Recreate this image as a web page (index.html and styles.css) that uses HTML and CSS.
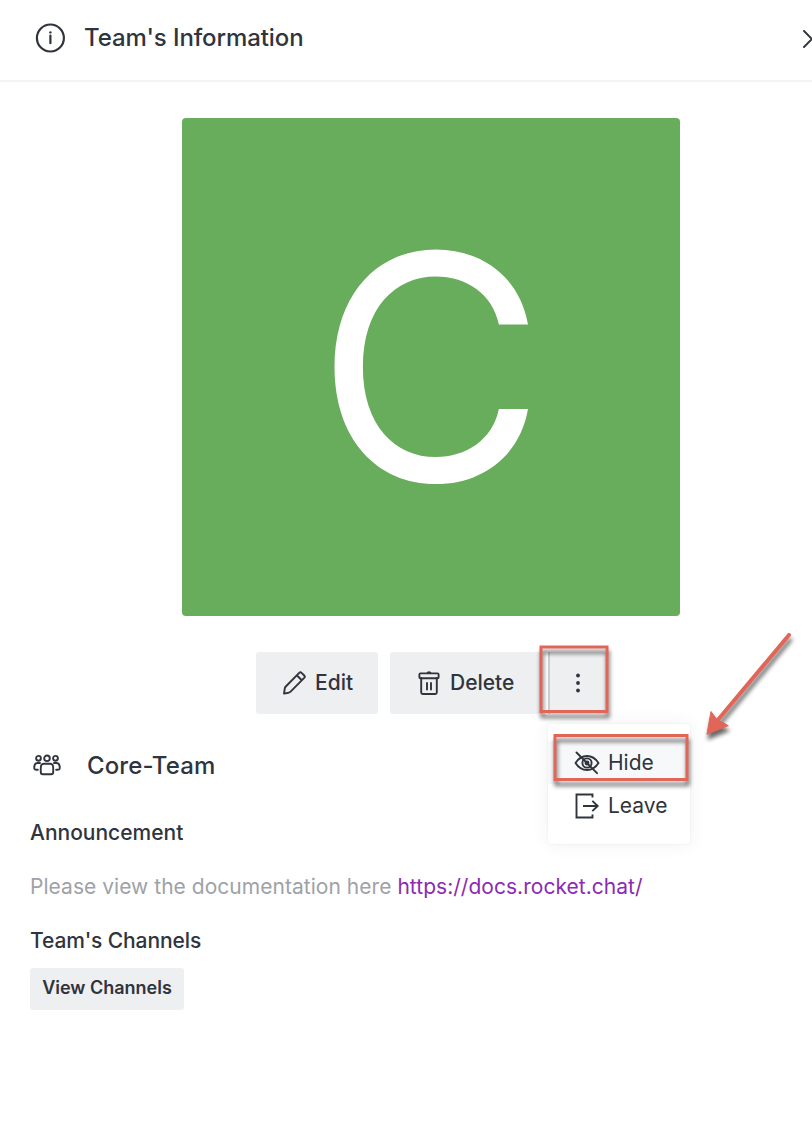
FILE: index.html
```html
<!DOCTYPE html>
<html lang="en">
<head>
<meta charset="utf-8">
<title>Team's Information</title>
<link rel="stylesheet" href="styles.css">
</head>
<body>
<main class="panel">
  <header class="header">
    <svg class="icon info-icon" width="30" height="30" viewBox="0 0 30 30"><circle cx="15.4" cy="15" r="13.5"/><path d="M15.4 12.5V20.2"/><circle class="solid" cx="15.4" cy="9.4" r="1.2"/></svg>
    <h1 class="title">Team's Information</h1>
    <svg class="icon close-icon" width="10" height="20" viewBox="0 0 10 20"><path d="M2 2L10 10L2 18"/></svg>
  </header>
  <section class="content">
    <div class="avatar"><span class="avatar-letter">C</span></div>
    <div class="actions">
      <button class="button edit">
        <svg class="icon" width="24" height="24" viewBox="0 0 24 24"><path d="M2 22.6L2.8 17.4Q3 16.3 3.8 15.5L17.2 1.9Q18.4.8 19.6 1.9L22.2 4.5Q23.4 5.7 22.2 6.9L8.6 20.6Q7.8 21.4 6.6 21.7ZM15 4.5L19.8 9.2"/></svg>
        <span class="edit-label">Edit</span>
      </button>
      <button class="button delete">
        <svg class="icon" width="22" height="26" viewBox="0 0 22 26"><rect x="1.4" y="3.4" width="19.2" height="4.8" rx="1"/><path d="M3.2 8V22.5Q3.2 24 4.7 24H17.3Q18.8 24 18.8 22.5V8M9 13V19.5M13 13V19.5"/><path class="solid" d="M8.5 3Q9 1.2 11 1.2T13.5 3Z"/></svg>
        <span class="delete-label">Delete</span>
      </button>
      <div class="more-wrap">
        <button class="button more" aria-label="More"><svg class="icon" width="6" height="22" viewBox="0 0 6 22"><g class="solid"><circle cx="3" cy="3.5" r="1.9"/><circle cx="3" cy="11" r="1.9"/><circle cx="3" cy="18.5" r="1.9"/></g></svg></button>
        <div class="menu">
          <div class="menu-item active">
            <svg class="icon" width="26" height="24" viewBox="0 0 26 24"><path d="M1.5 12Q6 5 13 5T24.5 12Q20 19 13 19T1.5 12Z"/><circle cx="13" cy="12" r="4.6"/><circle cx="13" cy="12" r="1.5"/><path d="M2.5 1.5L23 22.2"/></svg>
            <span>Hide</span>
          </div>
          <div class="menu-item">
            <svg class="icon leave-icon" width="26" height="26" viewBox="0 0 26 26"><path d="M18.5 4.5V1.5H2.5V24.5H18.5V21.5M9 13H23.7M18.3 7.9L23.7 13L18.3 18.1"/></svg>
            <span>Leave</span>
          </div>
        </div>
      </div>
    </div>
    <div class="team">
      <svg class="icon" width="28" height="22" viewBox="0 0 28 22"><circle cx="5.5" cy="4.3" r="2.4"/><circle cx="14" cy="4.3" r="2.8"/><circle cx="22.5" cy="4.3" r="2.4"/><path d="M8.2 11.2Q9 9.8 11 9.8H17Q19 9.8 19.8 11.2Q20.4 13 20.2 18.2Q20.2 20.2 18.2 20.2H9.8Q7.8 20.2 7.8 18.2Q7.6 13 8.2 11.2ZM7 9H4.6Q1.5 9 1.3 13Q.9 15.8 3 15.8H4.8M21 9H23.4Q26.5 9 26.7 13Q27.1 15.8 25 15.8H23.2"/></svg>
      <span class="team-name">Core-Team</span>
    </div>
    <h2 class="label announcement-label">Announcement</h2>
    <p class="announcement">Please view the documentation here <a class="link">https://docs.rocket.chat/</a></p>
    <h2 class="label channels-label">Team's Channels</h2>
    <button class="view-channels">View Channels</button>
  </section>
  <svg class="callouts" width="812" height="1142" viewBox="0 0 812 1142">
    <rect x="541" y="647" width="66" height="64.5"/>
    <rect x="555" y="735.5" width="132" height="44"/>
    <path d="M789 635L717 721"/>
    <path class="arrow-head" d="M707 734L711 711.5L716.5 719L728 725.5Z"/>
  </svg>
</main>
</body>
</html>
```
FILE: styles.css
```css
* { box-sizing: border-box; }
body { margin: 0; background: #fff; color: #2f343d; font-family: Inter, "Liberation Sans", sans-serif; }
button { border: 0; font: inherit; color: inherit; padding: 0; }
.panel { position: relative; width: 812px; height: 1142px; overflow: hidden; }
.icon { flex: none; fill: none; stroke: #2f343d; stroke-width: 1.9; stroke-linejoin: round; stroke-linecap: round; }
.icon .solid { fill: #2f343d; stroke: none; }
.header { display: flex; align-items: center; height: 82px; padding: 0 0 5px 35px; border-bottom: 2px solid #f2f3f5; }
.info-icon { stroke-width: 2.2; }
.title { margin: 0 auto 0 19px; font-size: 24px; line-height: 32px; font-weight: 470; letter-spacing: -.1px; }
.close-icon { margin-top: 3px; }
.content { padding: 36px 30px; }
.avatar { display: flex; align-items: center; justify-content: center; width: 498px; height: 498px; margin-left: 152px; border-radius: 4px; background: #68ad5c; color: #fff; overflow: hidden; }
.avatar-letter { padding-right: 1px; font-size: 314px; line-height: 499px; font-weight: 440; }
.actions { display: flex; margin: 36px 0 0 226px; height: 62px; font-size: 21px; font-weight: 450; letter-spacing: .2px; }
.button { display: flex; align-items: center; height: 62px; padding-bottom: 1px; background: #eeeff1; border-radius: 3px; }
.edit { width: 122px; padding-left: 26px; gap: 9px; margin-right: 12px; }
.delete { width: 152px; padding-left: 28px; gap: 10px; border-radius: 3px 0 0 3px; }
.more-wrap { position: relative; margin-left: 6px; }
.more { width: 58px; justify-content: center; padding-bottom: 0; border-left: 2px solid #cbced1; border-radius: 0 3px 3px 0; }
.menu { position: absolute; left: 0; top: 72px; width: 142px; height: 120px; padding-top: 17px; border-radius: 3px; background: #fff; box-shadow: 0 0 2px rgba(47,52,61,.1), 0 0 18px rgba(47,52,61,.07); font-weight: 400; }
.menu-item { display: flex; align-items: center; gap: 8px; height: 43px; padding-left: 26px; letter-spacing: 0; }
.leave-icon { stroke-linecap: butt; stroke-linejoin: miter; }
.active { background: #f7f8fa; }
.team { display: flex; align-items: center; height: 32px; margin: 35px 0 0 3px; }
.team-name { margin-left: 26px; font-size: 24px; font-weight: 470; letter-spacing: .1px; }
.label { margin: 0; font-size: 21px; line-height: 30px; font-weight: 480; }
.announcement-label { margin-top: 37px; }
.channels-label { letter-spacing: -.1px; }
.announcement { margin: 24px 0; font-size: 21px; line-height: 30px; letter-spacing: .035px; color: #9ea2a8; }
.link { color: #8a2bb5; }
.view-channels { display: block; width: 154px; height: 42px; margin-top: 12px; padding-bottom: 3px; border-radius: 3px; background: #eeeff1; font-size: 18px; font-weight: 600; }
.callouts { position: absolute; inset: 0; pointer-events: none; fill: none; stroke: #e26658; stroke-width: 3; filter: drop-shadow(1px 5px 2px rgba(0,0,0,.6)); }
.callouts path { stroke-width: 4; stroke-linecap: round; }
.callouts .arrow-head { fill: #e26658; stroke-width: 1; }
```
